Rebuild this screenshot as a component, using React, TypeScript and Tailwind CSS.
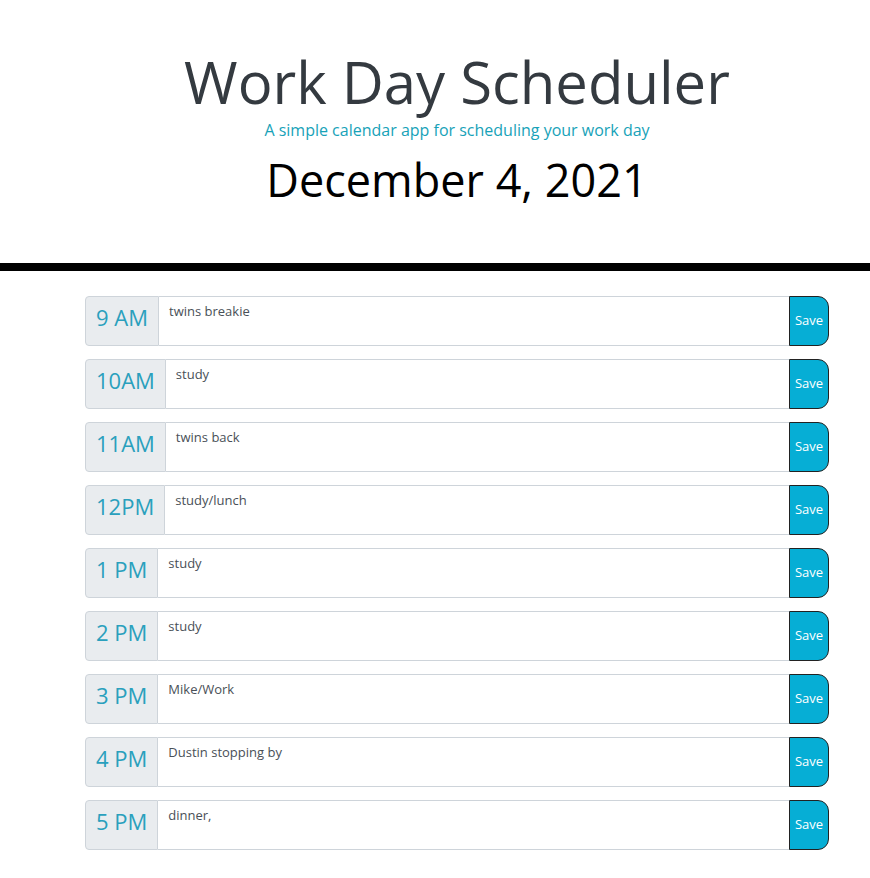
import { useState } from 'react';

const hours = [
  { label: '9 AM', text: 'twins breakie' },
  { label: '10AM', text: 'study' },
  { label: '11AM', text: 'twins back' },
  { label: '12PM', text: 'study/lunch' },
  { label: '1 PM', text: 'study' },
  { label: '2 PM', text: 'study' },
  { label: '3 PM', text: 'Mike/Work' },
  { label: '4 PM', text: 'Dustin stopping by' },
  { label: '5 PM', text: 'dinner,' },
];

function HourRow({ label, text }: { label: string; text: string }) {
  const [value, setValue] = useState(text);
  return (
    <div className="flex h-[50px] w-full">
      <div className="flex items-start rounded-l-[4px] border border-[#ced4da] bg-[#e9ecef] px-[10px] pt-[2px] text-[22px] leading-[36px] text-[#2aa0bd]">
        {label}
      </div>
      <textarea
        value={value}
        onChange={(e) => setValue(e.target.value)}
        className="flex-1 resize-none border-y border-[#ced4da] bg-white px-[10px] pt-[4px] text-[13px] leading-[20px] text-[#495057] outline-none"
      />
      <button className="w-[40px] rounded-r-[11px] border border-[#222] bg-[#06aed5] text-[13px] text-white">
        Save
      </button>
    </div>
  );
}

export default function App() {
  return (
    <div className="min-h-screen bg-white pb-[28px] font-['Open_Sans',sans-serif]">
      {/* Header */}
      <header className="pl-[44px] pt-[47px] text-center">
        <h1 className="text-[58px] font-normal leading-[1.2] text-[#343a40]">Work Day Scheduler</h1>
        <p className="mt-[1px] text-[16px] leading-[24px] text-[#17a2b8]">
          A simple calendar app for scheduling your work day
        </p>
        <p className="mt-[11px] text-[45px] leading-[1.2] text-black">December 4, 2021</p>
      </header>

      <div className="mt-[56px] h-[8px] w-full bg-black" />

      {/* Time blocks */}
      <div className="pl-[44px] pt-[25px]">
        <div className="mx-auto flex w-[744px] flex-col gap-[13px]">
          {hours.map((h) => (
            <HourRow key={h.label} label={h.label} text={h.text} />
          ))}
        </div>
      </div>
    </div>
  );
}
